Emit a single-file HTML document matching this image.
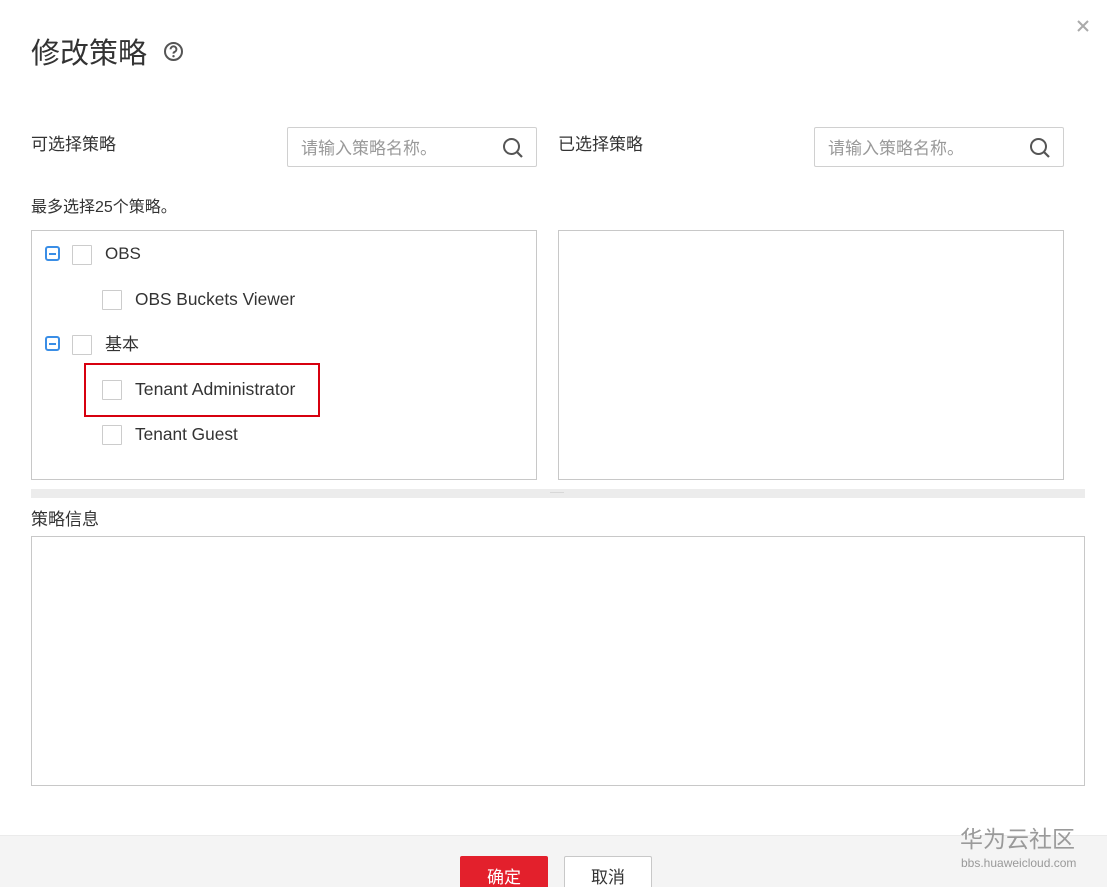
<!DOCTYPE html>
<html><head><meta charset="utf-8"><style>
*{margin:0;padding:0;box-sizing:border-box}
html,body{width:1107px;height:887px;overflow:hidden}
body{background:#fff;position:relative;font-family:"Liberation Sans","Noto Sans CJK SC",sans-serif;color:#333;line-height:20px}
.a{position:absolute}
.t{font-size:17px;color:#333;white-space:nowrap;line-height:20px}
.box{border:1px solid #c8c8c8;background:#fff}
.cb{position:absolute;width:20px;height:20px;border:1px solid #ccc;background:#fff;border-radius:1px}
.ms{position:absolute;width:15px;height:15px;border:2px solid #3a8ee6;border-radius:3px}
.ms:after{content:"";position:absolute;left:2px;top:4.5px;width:7px;height:2px;background:#3a8ee6}
.inp{position:absolute;height:40px;border:1px solid #d0d0d0;border-radius:2px;font-size:17px;color:#999;padding:11px 0 0 13px;line-height:20px}
</style></head><body>
<div class="a" style="left:31px;top:36px;font-size:29px;line-height:36px;color:#333">修改策略</div>
<svg class="a" style="left:163px;top:41px" width="21" height="21" viewBox="0 0 21 21"><circle cx="10.5" cy="10.5" r="8.5" fill="none" stroke="#555" stroke-width="2"/><path d="M7.6 8.3a2.9 2.9 0 1 1 4 2.6c-.8.4-1.1.9-1.1 1.7" fill="none" stroke="#555" stroke-width="2"/><circle cx="10.5" cy="15.2" r="1.2" fill="#555"/></svg>
<svg class="a" style="left:1077px;top:20px" width="12" height="12"><path d="M1 1L11 11M11 1L1 11" stroke="#aaa" stroke-width="2"/></svg>
<div class="a t" style="left:31px;top:135px">可选择策略</div>
<div class="inp" style="left:287px;top:127px;width:250px">请输入策略名称。</div>
<svg class="a" style="left:502px;top:137px" width="22" height="22"><circle cx="9.5" cy="9.5" r="7.5" fill="none" stroke="#555" stroke-width="2"/><path d="M15 15l5 5" stroke="#555" stroke-width="2.2"/></svg>
<div class="a t" style="left:558px;top:135px">已选择策略</div>
<div class="inp" style="left:814px;top:127px;width:250px">请输入策略名称。</div>
<svg class="a" style="left:1029px;top:137px" width="22" height="22"><circle cx="9.5" cy="9.5" r="7.5" fill="none" stroke="#555" stroke-width="2"/><path d="M15 15l5 5" stroke="#555" stroke-width="2.2"/></svg>
<div class="a" style="left:31px;top:198px;font-size:16px;color:#333">最多选择25个策略。</div>
<div class="a box" style="left:31px;top:230px;width:506px;height:250px"></div>
<div class="a box" style="left:558px;top:230px;width:506px;height:250px"></div>
<div class="ms" style="left:45px;top:246px"></div>
<div class="cb" style="left:72px;top:245px"></div>
<div class="a t" style="left:105px;top:244px">OBS</div>
<div class="cb" style="left:102px;top:290px"></div>
<div class="a t" style="left:135px;top:289px;font-size:17.3px">OBS Buckets Viewer</div>
<div class="ms" style="left:45px;top:336px"></div>
<div class="cb" style="left:72px;top:335px"></div>
<div class="a t" style="left:105px;top:335px">基本</div>
<div class="a" style="left:84px;top:363px;width:236px;height:54px;border:2px solid #d7000f"></div>
<div class="cb" style="left:102px;top:380px"></div>
<div class="a t" style="left:135px;top:379px;font-size:17.6px">Tenant Administrator</div>
<div class="cb" style="left:102px;top:425px"></div>
<div class="a t" style="left:135px;top:424px;font-size:17.3px">Tenant Guest</div>
<div class="a" style="left:31px;top:489px;width:1054px;height:9px;background:#ececec"></div>
<div class="a" style="left:550px;top:492px;width:14px;height:1px;background:#d8d8d8"></div>
<div class="a t" style="left:31px;top:510px">策略信息</div>
<div class="a box" style="left:31px;top:536px;width:1054px;height:250px"></div>
<div class="a" style="left:0;top:835px;width:1107px;height:52px;background:#f4f4f4;border-top:1px solid #ebebeb"></div>
<div class="a" style="left:460px;top:856px;width:88px;height:31px;background:#e3202c;border-radius:2px 2px 0 0;color:#fff;font-size:17px;text-align:center;padding-top:12px">确定</div>
<div class="a" style="left:564px;top:856px;width:88px;height:31px;background:#fff;border:1px solid #c8c8c8;border-bottom:none;border-radius:2px 2px 0 0;color:#333;font-size:17px;text-align:center;padding-top:11px">取消</div>
<div class="a" style="left:960px;top:826px;font-size:23px;line-height:26px;color:#9a9a9a">华为云社区</div>
<div class="a" style="left:961px;top:853px;font-size:12px;color:#999">bbs.huaweicloud.com</div>
</body></html>
